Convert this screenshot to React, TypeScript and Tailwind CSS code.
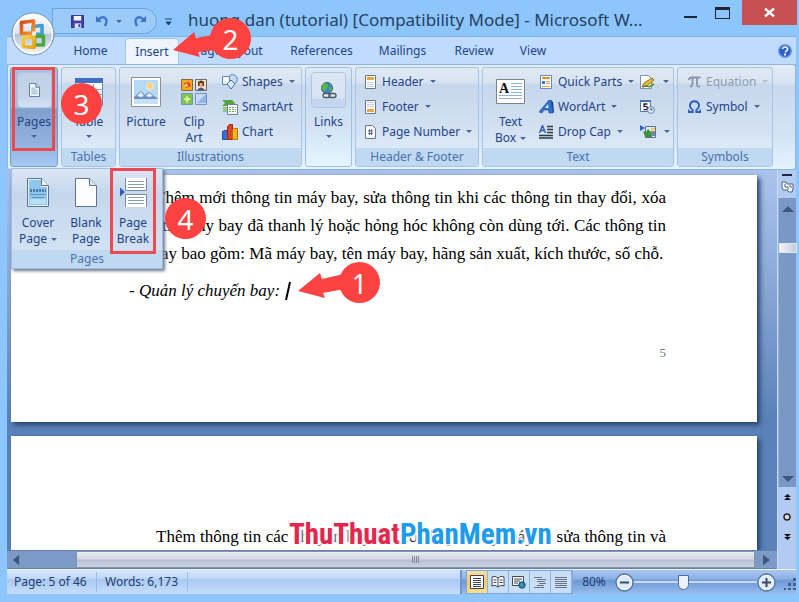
import type { ReactNode } from "react";

const groupBg =
  "bg-[linear-gradient(to_bottom,#dfe9f5_0%,#d8e3f2_15%,#c7d7ec_17%,#d0dff1_55%,#dce9f8_82%)]";

function Caret({ faded = false }: { faded?: boolean }) {
  return (
    <svg width="6" height="3" viewBox="0 0 6 3" className="shrink-0" aria-hidden="true">
      <path d="M0 0h6L3 3z" fill={faded ? "#b9bfca" : "#4a6698"} />
    </svg>
  );
}

function Group({ label, width, children }: { label: string; width: string; children: ReactNode }) {
  return (
    <section
      aria-label={label}
      className={`flex shrink-0 flex-col overflow-hidden rounded-[3px] border border-[#a9c3e3] ${groupBg} ${width}`}
    >
      <div className="flex flex-1 pt-px">{children}</div>
      <div className="h-[18px] bg-[#c1d8f1] text-center text-[12px] leading-[18px] text-[#4872b0]">{label}</div>
    </section>
  );
}

function Big({
  icon,
  lines,
  caret,
  width,
}: {
  icon: ReactNode;
  lines: string[];
  caret?: boolean;
  width: string;
}) {
  return (
    <button type="button" className={`flex shrink-0 flex-col items-center ${width}`}>
      <span className="flex h-[45px] items-center justify-center">{icon}</span>
      {lines.map((l, i) => (
        <span key={l} className="flex h-4 items-center gap-1 whitespace-nowrap leading-4">
          {l}
          {caret && i > 0 && i === lines.length - 1 && <Caret />}
        </span>
      ))}
      {caret && lines.length === 1 && (
        <span className="flex h-3 items-center">
          <Caret />
        </span>
      )}
    </button>
  );
}

function Row({
  icon,
  label,
  caret,
  faded,
}: {
  icon: ReactNode;
  label: string;
  caret?: boolean;
  faded?: boolean;
}) {
  return (
    <button
      type="button"
      disabled={faded}
      className={`flex h-[25px] items-center gap-1 whitespace-nowrap ${faded ? "text-[#8f9db2]" : ""}`}
    >
      <span className="flex w-4 justify-center">{icon}</span>
      <span>{label}</span>
      {caret && (
        <span className="pl-0.5">
          <Caret faded={faded} />
        </span>
      )}
    </button>
  );
}

function OfficeOrb() {
  return (
    <svg width="44" height="44" viewBox="0 0 44 44" aria-hidden="true">
      <defs>
        <linearGradient id="orb" x1="0" y1="0" x2="0" y2="1">
          <stop offset="0" stopColor="#fff" />
          <stop offset=".48" stopColor="#dce4ee" />
          <stop offset=".52" stopColor="#b4c4da" />
          <stop offset="1" stopColor="#f4f9ff" />
        </linearGradient>
        <linearGradient id="or" x1="0" y1="0" x2="1" y2="1">
          <stop offset="0" stopColor="#d9481c" />
          <stop offset="1" stopColor="#f79a2e" />
        </linearGradient>
        <linearGradient id="ye" x1="0" y1="0" x2="1" y2="1">
          <stop offset="0" stopColor="#f9cf3a" />
          <stop offset="1" stopColor="#f0a010" />
        </linearGradient>
      </defs>
      <circle cx="22" cy="22" r="21" fill="url(#orb)" stroke="#6f8fb8" strokeWidth="1" />
      <circle cx="22" cy="22" r="19.5" fill="none" stroke="#fff" strokeWidth="1.4" />
      <g fill="none" strokeWidth="3.6" strokeLinejoin="round">
        <path d="M22 14.500l9-1v8.500l-9 .5z" stroke="#3f9fd8" />
        <path d="M23.500 24.500l9-.5v9l-9 0z" stroke="#4fa543" />
        <path d="M10.500 10.500l12-1.500v12l-12 .5z" stroke="url(#or)" />
        <path d="M12.500 25.500l10.500-.5v10.500l-10.500-1z" stroke="url(#ye)" />
      </g>
      <path d="M21 19.500l4 0v4h-4z" fill="#fff" opacity=".8" />
    </svg>
  );
}

const PageIcon = ({ w = 11, h = 14 }: { w?: number; h?: number }) => (
  <svg width={w} height={h} viewBox="0 0 12 15" aria-hidden="true">
    <path d="M.5.5h7l4 4v10H.5z" fill="#f7fbff" stroke="#4f6e9c" />
    <path d="M7.500.5v4h4" fill="#cfe0f4" stroke="#4f6e9c" />
    <path d="M2.500 5.500h4M2.500 7.500h7M2.500 9.500h7M2.500 11.500h7" stroke="#86a8d2" />
  </svg>
);

const TableIcon = () => (
  <svg width="28" height="28" viewBox="0 0 28 28" aria-hidden="true">
    <path d="M.5.5h27v27H.5z" fill="#fff" stroke="#6b87b5" />
    <path d="M0 0h28v5H0z" fill="#3f6fc7" />
    <path d="M0 11.500h28M0 16.500h28M0 21.500h28M9.500 6v22M18.500 6v22" stroke="#7f9cc9" />
  </svg>
);

const PictureIcon = () => (
  <svg width="30" height="30" viewBox="0 0 30 30" aria-hidden="true">
    <path d="M.5.5h29v29H.5z" fill="#fff" stroke="#8a8f98" />
    <path d="M3 3h24v20H3z" fill="#b5daf6" />
    <circle cx="19" cy="9" r="3.500" fill="#fbd07c" stroke="#fdeccb" />
    <path d="M3 20l7-6 4 4 4-3 9 7v2H3z" fill="#6d93bf" />
    <path d="M6 19l4-4 3 4-3 1zM15 19l3-3 4 3-4 1z" fill="#e6f1fb" />
    <path d="M3 22h24v5H3z" fill="#c5e1f7" />
  </svg>
);

const ClipArtIcon = () => (
  <svg width="26" height="26" viewBox="0 0 26 26" aria-hidden="true">
    <path d="M.5.5h11v11H.5z" fill="#f7a823" stroke="#8a6a3a" />
    <path d="M3 4l5-1 2 4-5 2z" fill="#e5401d" />
    <path d="M3 7l3-3 1 4z" fill="#ffe36a" />
    <path d="M14.500.5h11v11h-11z" fill="#f1dfc8" stroke="#6b6b6b" />
    <path d="M17 3q3-3 6 0v4h-6z" fill="#5b3219" />
    <path d="M18.500 4h3v4h-3z" fill="#e7b189" />
    <path d="M16 11q4-5 8 0z" fill="#38618f" />
    <path d="M.5 14.500h11v11H.5z" fill="#7cc35a" stroke="#7398a8" />
    <path d="M6 16l1.500 3 3 1-3 1.500L6 25l-1-3.500L2 20l3-1z" fill="#e6f78c" />
    <path d="M14.500 14.500h11v11h-11z" fill="#c3daf8" stroke="#7c93bd" />
    <path d="M16 24l9-9v9z" fill="#8fb3ea" />
  </svg>
);

const ShapesIcon = () => (
  <svg width="16" height="16" viewBox="0 0 16 16" aria-hidden="true">
    <circle cx="10.500" cy="5.500" r="4.800" fill="#c3dbf5" stroke="#5380b5" />
    <path d="M.5 2.500h7v8h-7z" fill="#f5faff" stroke="#5d86b5" />
    <path d="M9 6l4 4-4 5-4-5z" fill="#dcebfb" stroke="#426fa8" />
  </svg>
);
const SmartArtIcon = () => (
  <svg width="16" height="16" viewBox="0 0 16 16" aria-hidden="true">
    <path d="M0 1h10l3 3-3 3H0l3-3z" fill="#57a344" />
    <path d="M1 8h5v5H1z" fill="#8fcb78" />
    <path d="M5.500 5.500h10v10h-10z" fill="#fff" stroke="#68819f" />
    <path d="M7 8.500h7M7 10.500h7M7 12.500h7" stroke="#6fa25e" strokeDasharray="2 1" />
  </svg>
);
const ChartIcon = () => (
  <svg width="16" height="16" viewBox="0 0 16 16" aria-hidden="true">
    <path d="M.5 7.500l2-1h3v9h-5z" fill="#3a6fd0" stroke="#24509a" />
    <path d="M5.500 2.500l2-2h3v15h-5z" fill="#e0431f" stroke="#9c2a10" />
    <path d="M10.500 5.500l2-1h3v11h-5z" fill="#f9b41d" stroke="#a8740c" />
  </svg>
);
const LinkIcon = () => (
  <svg width="17" height="17" viewBox="0 0 17 17" aria-hidden="true">
    <circle cx="7" cy="6" r="5.500" fill="#3d86cf" stroke="#2b6a6a" />
    <path d="M3 2q4-2 5 1l-1 4-3 2-3-3zM9 6l3-2v4l-2 2z" fill="#5cb345" />
    <rect x="3" y="11.500" width="7" height="4" rx="2" fill="#e7edf5" stroke="#4b5563" strokeWidth="1.300" />
    <rect x="9" y="11.500" width="7" height="4" rx="2" fill="none" stroke="#4b5563" strokeWidth="1.300" />
  </svg>
);

function HfIcon({ kind }: { kind: "header" | "footer" | "number" }) {
  return (
    <svg width="11" height="14" viewBox="0 0 11 14" aria-hidden="true">
      <path d={kind === "number" ? "M.5.5h7l3 3v10H.5z" : "M.5.5h10v13H.5z"} fill="#fff" stroke="#6b7789" />
      {kind === "header" && <path d="M2 2h7v3H2z" fill="#f0a53c" />}
      {kind === "footer" && <path d="M2 9h7v3H2z" fill="#f0a53c" />}
      {kind === "header" && <path d="M2 7.500h7M2 9.500h7M2 11.500h7" stroke="#c3cddb" />}
      {kind === "footer" && <path d="M2 2.500h7M2 4.500h7M2 6.500h7" stroke="#c3cddb" />}
      {kind === "number" && <path d="M4.500 4v6M6.500 4v6M3 6h5M3 8.500h5" stroke="#3b5a8c" strokeWidth=".8" />}
    </svg>
  );
}

const TextBoxIcon = () => (
  <svg width="29" height="25" viewBox="0 0 29 25" aria-hidden="true">
    <path d="M.5.5h28v24H.5z" fill="#fff" stroke="#7d828b" />
    <path d="M15 4.500h11M15 7.500h11M15 10.500h11M15 13.500h11M3 16.500h23M3 19.500h23" stroke="#8fb0dc" />
    <text x="3" y="14" fontSize="14" fontWeight="bold" fontFamily="Liberation Serif, serif" fill="#111">
      A
    </text>
  </svg>
);
const QuickIcon = () => (
  <svg width="12" height="14" viewBox="0 0 12 14" aria-hidden="true">
    <path d="M.5.5h11v13H.5z" fill="#fff" stroke="#6b89b5" />
    <path d="M2 2h8v2H2z" fill="#ee8a24" />
    <path d="M2 6h3v3H2z" fill="#3a77cf" />
    <path d="M6 6.500h4M6 8.500h4M2 11.500h8" stroke="#e7a54a" />
  </svg>
);
const WordArtIcon = () => (
  <svg width="15" height="14" viewBox="0 0 15 14" aria-hidden="true">
    <path d="M0 12L10 0l2 0 2 13h-4l-.5-3H5l-2 3z" fill="#2f6fd0" stroke="#1d4c9e" strokeWidth=".6" />
    <path d="M6 8l3-4 .5 4z" fill="#dbe7f7" />
    <path d="M12 0l2 2 1 10-1 1z" fill="#174083" />
  </svg>
);
const DropCapIcon = () => (
  <svg width="14" height="14" viewBox="0 0 14 14" aria-hidden="true">
    <path d="M8 1.500h6M8 4.500h6M8 7.500h6M0 10.500h14M0 13h14" stroke="#2f3745" strokeWidth="1.300" />
    <path d="M.5 8L3.500.5l3 7.500M1.500 5.500h4" fill="none" stroke="#1f56ae" strokeWidth="1.300" />
  </svg>
);
const SignatureIcon = () => (
  <svg width="15" height="14" viewBox="0 0 15 14" aria-hidden="true">
    <path d="M.5.5h8l3 3v10H.5z" fill="#fff" stroke="#8294ad" />
    <path d="M2 12l2-4 8-5 2 2-7 6z" fill="#e9b92e" stroke="#755419" strokeWidth=".8" />
    <path d="M9 12l5-3M3 12q3-2 6 0" stroke="#469132" strokeWidth="1.500" fill="none" />
  </svg>
);
const DateIcon = () => (
  <svg width="15" height="15" viewBox="0 0 15 15" aria-hidden="true">
    <path d="M.5 1.500h10v11H.5z" fill="#fff" stroke="#4d74ad" />
    <path d="M0 1h11v2H0z" fill="#4d74ad" />
    <path d="M7.500 5H4v2.500q3.500-.5 3.500 1.500t-4 1.500" fill="none" stroke="#223" strokeWidth="1.300" />
    <circle cx="11" cy="11" r="3.400" fill="#e9f2fc" stroke="#5c7db0" />
    <path d="M11 9v2h1.500" stroke="#334" fill="none" />
  </svg>
);
const ObjectIcon = () => (
  <svg width="16" height="13" viewBox="0 0 16 13" aria-hidden="true">
    <path d="M5.500 1.500h10v11h-10z" fill="#dfe9f4" stroke="#59718f" />
    <path d="M0 0l5 3-5 3z" fill="#2c62c8" />
    <path d="M3 6l3 1 2-3 3 3 1-2v7H5z" fill="#3c9438" />
    <path d="M11 6h4v5h-4z" fill="#7d879a" />
    <path d="M11 3h4v2h-4z" fill="#f5c84a" />
  </svg>
);

const CoverIcon = () => (
  <svg width="22" height="29" viewBox="0 0 22 29" aria-hidden="true">
    <path d="M.5.5h14l7 7v21H.5z" fill="#e4f2fd" stroke="#5b7395" />
    <path d="M2 2h12v7h6v18H2z" fill="#8dc7ee" />
    <path d="M14.500.5v7h7" fill="#f7fbff" stroke="#5b7395" />
    <path d="M3 12.500h16" stroke="#4a7aa8" strokeWidth="3" strokeDasharray="2 1" />
    <path d="M3 16.500h16M5 19.500h12" stroke="#5e95c2" />
    <path d="M3 21h16v5H3z" fill="#b9def6" />
  </svg>
);
const BlankIcon = () => (
  <svg width="22" height="29" viewBox="0 0 22 29" aria-hidden="true">
    <path d="M.5.5h14l7 7v21H.5z" fill="#fbfdff" stroke="#62728c" />
    <path d="M14.500.5v7h7" fill="#dce6f2" stroke="#62728c" />
  </svg>
);
const BreakIcon = () => (
  <svg width="27" height="29" viewBox="0 0 27 29" aria-hidden="true">
    <path d="M5.500 0v12.500h21V0" fill="#fff" stroke="#7a8ba3" />
    <path d="M5.500 29V16.500h21V29" fill="#fff" stroke="#7a8ba3" />
    <path d="M8 3.500h16M8 6.500h16M8 9.500h16M8 19.500h16M8 22.500h16M8 25.500h16" stroke="#8e99aa" />
    <path d="M0 9.500l5 4.500-5 4.500z" fill="#2f5bc4" />
  </svg>
);

function TitleBar() {
  return (
    <header className="flex h-9 shrink-0 pl-[52px] pr-0.5">
      <div className="mb-0.5 flex h-[26px] w-[105px] items-center gap-3 self-end rounded-r-full border border-[#6ea3dc] bg-[#9dcbf9] pl-[18px]">
        <button type="button" aria-label="Save">
          <svg width="13" height="13" viewBox="0 0 14 14" aria-hidden="true">
            <path d="M.5.5h13v13H.5z" fill="#4040a8" stroke="#2a2a80" />
            <path d="M3 1h8v5H3z" fill="#f2f5fb" />
            <path d="M4 9h7v5H4z" fill="#d9e0ee" />
            <path d="M8 10h2v3H8z" fill="#3a3a90" />
          </svg>
        </button>
        <button type="button" aria-label="Undo" className="flex items-center gap-2">
          <svg width="12" height="12" viewBox="0 0 12 12" aria-hidden="true">
            <path d="M2 5q4-4 7-2t0 8" fill="none" stroke="#3f74cc" strokeWidth="2.400" />
            <path d="M0 1v6h6z" fill="#3f74cc" />
          </svg>
          <Caret />
        </button>
        <button type="button" aria-label="Redo">
          <svg width="12" height="12" viewBox="0 0 12 12" aria-hidden="true">
            <path d="M10 5Q6 1 3 3t0 8" fill="none" stroke="#3f74cc" strokeWidth="2.400" />
            <path d="M12 1v6H6z" fill="#3f74cc" />
          </svg>
        </button>
      </div>
      <button type="button" aria-label="Customize toolbar" className="mt-2 px-2">
        <svg width="7" height="8" viewBox="0 0 7 8" aria-hidden="true">
          <path d="M0 1h7M1 4h5L3.500 7z" fill="#24406f" stroke="#24406f" />
        </svg>
      </button>
      <h1 className="min-w-0 flex-1 whitespace-nowrap pl-2 pt-0.5 text-[17px] leading-9 text-[#27405f]">
        huong dan (tutorial) [Compatibility Mode] - Microsoft W...
      </h1>
      <div className="flex h-[25px] shrink-0">
        <button type="button" aria-label="Minimize" className="flex w-7 items-end justify-center pb-[7px]">
          <span className="h-0.5 w-[13px] bg-[#1c2733]" />
        </button>
        <button type="button" aria-label="Maximize" className="flex w-9 items-center justify-center">
          <span className="h-[12px] w-[15px] border border-t-[3px] border-[#1c2733]" />
        </button>
        <button type="button" aria-label="Close" className="ml-0.5 flex w-[55px] items-center justify-center bg-[#c75050]">
          <svg width="11" height="9" viewBox="0 0 11 9" aria-hidden="true">
            <path d="M1 .5l9 8M10 .5l-9 8" stroke="#fff" strokeWidth="2.400" />
          </svg>
        </button>
      </div>
    </header>
  );
}

function Tab({ label, width, active }: { label: string; width: string; active?: boolean }) {
  return (
    <button
      type="button"
      role="tab"
      aria-selected={!!active}
      className={`h-[26px] shrink-0 whitespace-nowrap text-center ${width} ${
        active ? "rounded-t border border-b-0 border-[#9fc4ee] bg-[#edf4fc]" : ""
      }`}
    >
      {label}
    </button>
  );
}

function Ribbon() {
  return (
    <>
      <div role="tablist" className="flex h-[28px] shrink-0 items-end border-t border-[#83b3ea] bg-[#bfdbff] pl-[49px] pr-1">
        <Tab label="Home" width="w-[69px]" />
        <Tab label="Insert" width="w-[54px]" active />
        <Tab label="Page Layout" width="w-[98px]" />
        <Tab label="References" width="w-[89px]" />
        <Tab label="Mailings" width="w-[73px]" />
        <Tab label="Review" width="w-[70px]" />
        <Tab label="View" width="w-[48px]" />
        <button type="button" aria-label="Help" className="mb-1.5 ml-auto">
          <svg width="14" height="14" viewBox="0 0 14 14" aria-hidden="true">
            <circle cx="7" cy="7" r="6.300" fill="#2a62c9" stroke="#6d9be3" strokeWidth="1.400" />
            <path d="M4.500 5q.5-2 2.500-2t2.500 1.800T7 8" fill="none" stroke="#fff" strokeWidth="1.600" />
            <path d="M6 9.500h2v2H6z" fill="#fff" />
          </svg>
        </button>
      </div>
      <div className="flex h-[106px] shrink-0 gap-[3px] rounded-[3px] border border-[#8fb2df] bg-[linear-gradient(to_bottom,#e3ecf8_0%,#d7e3f3_18%,#c8d9ee_20%,#d5e4f5_70%,#e5f4fe_100%)] px-0.5 pb-0.5 pt-0.5">
        <button
          type="button"
          className="flex w-[48px] shrink-0 flex-col items-center rounded-[3px] border border-[#7b9cc9] bg-[linear-gradient(to_bottom,#a9bfdd_0%,#a3bcdf_40%,#7f9fcd_42%,#94b5e0_80%,#a4c9f3_100%)] pt-1"
        >
          <span className="flex h-9 w-[35px] items-center justify-center rounded-sm border border-[#aec4e2] bg-[linear-gradient(to_bottom,#c0d0e6_0%,#c5d4e9_70%,#d4e2f4_100%)]">
            <PageIcon />
          </span>
          <span className="mt-1.5 leading-4">Pages</span>
          <span className="flex h-3 items-center">
            <Caret />
          </span>
        </button>
        <Group label="Tables" width="w-[55px]">
          <Big icon={<TableIcon />} lines={["Table"]} caret width="w-full" />
        </Group>
        <Group label="Illustrations" width="w-[183px]">
          <Big icon={<PictureIcon />} lines={["Picture"]} width="w-[52px]" />
          <Big icon={<ClipArtIcon />} lines={["Clip", "Art"]} width="w-[44px]" />
          <div className="flex flex-col items-start pl-1.5">
            <Row icon={<ShapesIcon />} label="Shapes" caret />
            <Row icon={<SmartArtIcon />} label="SmartArt" />
            <Row icon={<ChartIcon />} label="Chart" />
          </div>
        </Group>
        <button
          type="button"
          className="flex w-[47px] shrink-0 flex-col items-center rounded-[3px] border border-[#9fbfe6] bg-[linear-gradient(to_bottom,#dfe9f6_0%,#c9d9ef_20%,#d3e3f5_60%,#e3f6ff_100%)] pt-1"
        >
          <span className="flex h-9 w-[35px] items-center justify-center rounded-sm border border-[#aec6e4] bg-[linear-gradient(to_bottom,#dce7f5_0%,#d8e4f3_74%,#c3d6ee_76%)]">
            <LinkIcon />
          </span>
          <span className="mt-1.5 leading-4">Links</span>
          <span className="flex h-3 items-center">
            <Caret />
          </span>
        </button>
        <Group label="Header & Footer" width="w-[124px]">
          <div className="flex flex-col items-start pl-1.5">
            <Row icon={<HfIcon kind="header" />} label="Header" caret />
            <Row icon={<HfIcon kind="footer" />} label="Footer" caret />
            <Row icon={<HfIcon kind="number" />} label="Page Number" caret />
          </div>
        </Group>
        <Group label="Text" width="w-[192px]">
          <Big icon={<TextBoxIcon />} lines={["Text", "Box"]} caret width="w-[55px]" />
          <div className="flex w-[102px] flex-col items-start">
            <Row icon={<QuickIcon />} label="Quick Parts" caret />
            <Row icon={<WordArtIcon />} label="WordArt" caret />
            <Row icon={<DropCapIcon />} label="Drop Cap" caret />
          </div>
          <div className="flex flex-col items-start">
            <button type="button" aria-label="Signature line" className="flex h-[25px] items-center gap-2">
              <SignatureIcon />
              <Caret />
            </button>
            <button type="button" aria-label="Date and time" className="flex h-[25px] items-center">
              <DateIcon />
            </button>
            <button type="button" aria-label="Object" className="flex h-[25px] items-center gap-2">
              <ObjectIcon />
              <Caret />
            </button>
          </div>
        </Group>
        <Group label="Symbols" width="w-[96px]">
          <div className="flex flex-col items-start pl-2">
            <Row
              icon={
                <svg width="13" height="12" viewBox="0 0 13 12" fill="none" stroke="#8793a8" strokeWidth="1.800" aria-hidden="true">
                  <path d="M.5 4q1-2.500 3-2.500h9M4.500 2v5q0 3-2.500 4M9 2v6.500q0 2.500 3 2" />
                </svg>
              }
              label="Equation"
              caret
              faded
            />
            <Row
              icon={
                <svg width="13" height="13" viewBox="0 0 13 13" fill="none" stroke="#2b5cc0" strokeWidth="1.900" aria-hidden="true">
                  <path d="M.5 9.500v2.500h4.200v-2Q1.500 8 2 5q.7-3.800 4.500-3.800T11 5q.5 3-2.700 5v2h4.200V9.500" />
                </svg>
              }
              label="Symbol"
              caret
            />
          </div>
        </Group>
      </div>
    </>
  );
}

function Arrow({ d }: { d: string }) {
  return (
    <svg width="12" height="8" viewBox="0 0 12 8" className="shrink-0" aria-hidden="true">
      <path d={d} fill="#3d557f" />
    </svg>
  );
}

function Document() {
  const line = "[text-align-last:justify] whitespace-nowrap";
  return (
    <div className="flex min-h-0 flex-1 bg-[#b3cbf0]">
      <div className="flex min-w-0 flex-1 flex-col">
        <main className="flex min-h-0 flex-1 flex-col gap-3.5 overflow-hidden bg-[linear-gradient(to_bottom,#a9c3ec_0%,#8fadda_25%,#5b82b8_65%,#5a82b9_100%)] pl-1 pr-5 pt-[5px] font-['Liberation_Serif',serif] text-[17px] text-black">
          <article className="h-[247px] shrink-0 bg-white pl-[108px] pr-[91px] pt-[9px] shadow-[3px_3px_5px_#26426e]">
            <div className="leading-[28px]">
              <p className={`${line} pl-9`}>Thêm mới thông tin máy bay, sửa thông tin khi các thông tin thay đổi, xóa</p>
              <p className={line}>thông tin máy bay đã thanh lý hoặc hỏng hóc không còn dùng tới. Các thông tin</p>
              <p className="whitespace-nowrap">máy bay bao gồm: Mã máy bay, tên máy bay, hãng sản xuất, kích thước, số chỗ.</p>
            </div>
            <p className="mt-[9px] flex items-center pl-2.5 italic leading-[28px]">
              - Quản lý chuyến bay:
              <svg width="8" height="20" viewBox="0 0 8 20" className="ml-1" aria-hidden="true">
                <path d="M6 1L2 19" stroke="#000" strokeWidth="2" />
              </svg>
            </p>
            <p className="mt-[34px] text-right text-[13px] leading-[28px] text-[#777]">5</p>
          </article>
          <article className="min-h-0 flex-1 bg-white pl-[145px] pr-[91px] pt-[88px] shadow-[3px_3px_5px_#26426e]">
            <p className={`${line} leading-[26px]`}>
              Thêm thông tin các chuyến bay khi có chuyến bay máy tr, sửa thông tin và
            </p>
          </article>
        </main>
        <div className="flex h-[19px] shrink-0 border-y border-[#6381b5] bg-[#7b9ac6]">
          <button type="button" aria-label="Scroll left" className="flex w-[69px] items-center pl-1.5">
            <svg width="7" height="12" viewBox="0 0 8 12" aria-hidden="true">
              <path d="M7 0v12L0 6z" fill="#3d557f" />
            </svg>
          </button>
          <div className="flex flex-1 items-center justify-center gap-px border border-[#8694ab] bg-[linear-gradient(to_bottom,#e6ebf3_0%,#d2d8e4_48%,#b7c1d3_52%,#c6d2e5_100%)]">
            <span className="h-[7px] w-px bg-[#7d8799]" />
            <span className="h-[7px] w-px bg-[#7d8799]" />
            <span className="h-[7px] w-px bg-[#7d8799]" />
            <span className="h-[7px] w-px bg-[#7d8799]" />
          </div>
          <button type="button" aria-label="Scroll right" className="flex w-[22px] items-center justify-center">
            <svg width="7" height="12" viewBox="0 0 8 12" aria-hidden="true">
              <path d="M0 0l8 6-8 6z" fill="#3d557f" />
            </svg>
          </button>
        </div>
      </div>
      <div className="flex w-[19px] shrink-0 flex-col items-center border-l border-[#c9dbf6] pt-1">
        <span className="h-0.5 w-[10px] bg-[#1c2b46]" />
        <button type="button" aria-label="View ruler" className="my-[5px]">
          <svg width="13" height="12" viewBox="0 0 13 12" aria-hidden="true">
            <path d="M1 1h4l1 2h6v5l-1 3H8L6 9H2L1 7z" fill="#f5f9ff" stroke="#4c6288" />
            <path d="M4 3v3h3v3M8 5h2v2" fill="none" stroke="#4c6288" />
          </svg>
        </button>
        <div className="flex w-full flex-1 flex-col items-center border-l border-[#96afd6] bg-[#7998c5] pb-1 pt-[7px]">
          <Arrow d="M0 7h12L6 1z" />
          <span className="mt-[30px] h-[10px] w-[18px] border border-[#dfe6f1] bg-[linear-gradient(to_right,#f2f4f8,#c3cbd9)]" />
          <span className="flex-1" />
          <Arrow d="M0 1h12L6 7z" />
        </div>
        <div className="flex h-[82px] flex-col items-center gap-3 pt-[7px]">
          <svg width="7" height="7" viewBox="0 0 7 7" aria-hidden="true">
            <path d="M3.500 0L7 3H0zM3.500 3L7 6H0z" fill="#111" />
          </svg>
          <svg width="8" height="8" viewBox="0 0 8 8" aria-hidden="true">
            <circle cx="4" cy="4" r="3" fill="#ddd" stroke="#222" strokeWidth="1.400" />
          </svg>
          <svg width="7" height="7" viewBox="0 0 7 7" aria-hidden="true">
            <path d="M3.500 4L7 1H0zM3.500 7L7 4H0z" fill="#111" />
          </svg>
        </div>
      </div>
    </div>
  );
}

function ViewButton({ label, active, children }: { label: string; active?: boolean; children: ReactNode }) {
  return (
    <button
      type="button"
      aria-label={label}
      className={`flex h-[22px] w-[21px] items-center justify-center border-r border-[#8fb3e4] ${
        active ? "bg-[linear-gradient(to_bottom,#fbe0a8_0%,#f8c666_50%,#fbe28c_100%)]" : "bg-[#c9dff9]"
      }`}
    >
      <svg width="14" height="14" viewBox="0 0 14 14" fill="none" stroke="#3e4654" aria-hidden="true">
        {children}
      </svg>
    </button>
  );
}

function ZoomButton({ label, d }: { label: string; d: string }) {
  return (
    <button type="button" aria-label={label} className="shrink-0">
      <svg width="19" height="19" viewBox="0 0 19 19" aria-hidden="true">
        <circle cx="9.500" cy="9.500" r="8.500" fill="#dce9f9" stroke="#56719c" strokeWidth="1.300" />
        <circle cx="9.500" cy="9.500" r="7" fill="none" stroke="#fff" />
        <path d={d} stroke="#3c4a60" strokeWidth="2" />
      </svg>
    </button>
  );
}

function StatusBar() {
  return (
    <footer className="flex h-[25px] shrink-0 items-center border-t border-[#eaf3ff] bg-[linear-gradient(to_bottom,#d5e6fc_0%,#c1d9f8_35%,#a9c9f2_38%,#c6defa_100%)] text-[#1f3b70]">
      <span className="flex h-5 w-[90px] items-center whitespace-nowrap border-r border-[#9bbce8] pl-[7px]">Page: 5 of 46</span>
      <span className="flex h-5 w-[91px] items-center whitespace-nowrap border-r border-[#9bbce8] pl-2">Words: 6,173</span>
      <div className="ml-auto flex h-full w-[336px] items-center border-l-2 border-[#6f96cf] bg-[linear-gradient(to_bottom,#a9c7f0_0%,#8fb2e5_35%,#6e99d6_45%,#98bdec_100%)] pl-1">
        <div className="flex border border-[#7fa5db]">
          <ViewButton label="Print layout" active>
            <path d="M.5.500h13v13H.5z" fill="#fff" />
            <path d="M3 3.500h8M3 5.500h8M3 7.500h8M3 9.500h8M3 11.500h8" />
          </ViewButton>
          <ViewButton label="Full screen reading">
            <path d="M7 3v9M7 3Q4 0 1 2v9q3-2 6 1 3-3 6-1V2q-3-2-6 1z" fill="#fff" />
            <path d="M2.500 5h3M2.500 7.500h3M8.500 5h3M8.500 7.500h3" />
          </ViewButton>
          <ViewButton label="Web layout">
            <path d="M.5 1.500h11v9H.5z" fill="#fff" />
            <path d="M2 4h8M2 6h6M2 8h4" />
            <circle cx="10" cy="10" r="3.300" fill="#2c77c4" stroke="#24557f" />
            <path d="M8 10l2-2 1 2-1 2z" fill="#4fae43" stroke="none" />
          </ViewButton>
          <ViewButton label="Outline">
            <path d="M1 2.500h8M4 4.500h9M4 6.500h8M6 8.500h7M4 10.500h7M1 12.500h10" stroke="#6d7480" />
          </ViewButton>
          <ViewButton label="Draft">
            <path d="M1 2.500h12M1 4.500h12M1 6.500h12M1 8.500h12M1 10.500h12M1 12.500h12" stroke="#6d7480" />
          </ViewButton>
        </div>
        <label htmlFor="zoom" className="w-[42px] text-center">80%</label>
        <ZoomButton label="Zoom out" d="M5 9.500h9" />
        <input
          id="zoom"
          type="range"
          min={10}
          max={210}
          defaultValue={88}
          className="h-[22px] min-w-0 flex-1 appearance-none bg-[linear-gradient(to_bottom,transparent_10px,#c7dcf7_10px,#c7dcf7_12px,transparent_12px)] [&::-webkit-slider-thumb]:h-[15px] [&::-webkit-slider-thumb]:w-[11px] [&::-webkit-slider-thumb]:appearance-none [&::-webkit-slider-thumb]:rounded-t-xs [&::-webkit-slider-thumb]:rounded-b-full [&::-webkit-slider-thumb]:border [&::-webkit-slider-thumb]:border-[#4f6c9c] [&::-webkit-slider-thumb]:bg-[#e8f1fc]"
        />
        <ZoomButton label="Zoom in" d="M5 9.500h9M9.500 5v9" />
        <svg width="12" height="12" viewBox="0 0 12 12" className="ml-2 mt-1 shrink-0" aria-hidden="true">
          <path d="M9 0h3v3H9zM9 5h3v3H9zM4 5h3v3H4zM9 10h3v2H9zM4 10h3v2H4zM0 10h2v2H0z" fill="#41618f" />
        </svg>
      </div>
    </footer>
  );
}

function PagesMenu() {
  return (
    <div className="absolute left-[11px] top-[168px] flex h-[101px] w-[152px] flex-col border border-[#a3bde0] bg-[linear-gradient(to_bottom,#dbe6f5_0%,#c6d7ed_25%,#d6e5f6_100%)] shadow-[2px_2px_3px_#6b7890]">
      <div className="flex flex-1 pt-px">
        <Big icon={<CoverIcon />} lines={["Cover", "Page"]} caret width="w-[52px]" />
        <Big icon={<BlankIcon />} lines={["Blank", "Page"]} width="w-[44px]" />
        <Big icon={<BreakIcon />} lines={["Page", "Break"]} width="w-[50px]" />
      </div>
      <div className="h-[18px] bg-[#c1d8f1] text-center leading-[18px] text-[#4872b0]">Pages</div>
    </div>
  );
}

function Callout({ n, place }: { n: number; place: string }) {
  return (
    <span
      className={`absolute flex size-[41px] items-center justify-center rounded-full bg-[#fd4242] text-[28px] leading-none text-white ${place}`}
    >
      {n}
    </span>
  );
}

export default function App() {
  return (
    <div className="relative flex h-screen flex-col overflow-hidden bg-[#8cc6fd] font-['Noto_Sans',sans-serif] text-[12px] text-[#1e4487]">
      <TitleBar />
      <div className="mb-2 ml-[7px] mr-[3px] flex min-h-0 flex-1 flex-col">
        <Ribbon />
        <Document />
        <StatusBar />
      </div>

      <button type="button" aria-label="Office" className="absolute left-[11px] top-3">
        <OfficeOrb />
      </button>
      <PagesMenu />

      <div className="absolute left-[289px] top-[517px] whitespace-nowrap font-['Liberation_Sans_Narrow','Roboto_Condensed',Roboto,sans-serif] text-[29px] font-bold leading-[34px] text-[#e5264c] [text-shadow:0_0_2px_white,0_0_3px_white,0_0_4px_white,0_0_4px_white,0_0_5px_white,0_0_5px_white]">
        ThuThuat<span className="text-[#1e9be9]">PhanMem.vn</span>
      </div>

      <span className="absolute left-3 top-[67px] h-[84px] w-[43px] border-3 border-[#ec4a50]" />
      <span className="absolute left-[110px] top-[168px] h-[86px] w-[46px] border-3 border-[#ec4a50]" />
      <svg width="70" height="30" viewBox="0 0 70 30" className="absolute left-[173px] top-[30px]" aria-hidden="true">
        <path d="M0 20L21 2l2 6 22-4v16l-20 2 2 5z" fill="#fd4242" />
      </svg>
      <svg width="50" height="30" viewBox="0 0 50 30" className="absolute left-[298px] top-[272px]" aria-hidden="true">
        <path d="M0 19L22 1l2 6 22-5v15l-21 4 2 5z" fill="#fd4242" />
      </svg>
      <Callout n={1} place="left-[339px] top-[262px]" />
      <Callout n={2} place="left-[210px] top-[18px]" />
      <Callout n={3} place="left-[61px] top-[83px]" />
      <Callout n={4} place="left-[165px] top-[198px]" />
    </div>
  );
}
